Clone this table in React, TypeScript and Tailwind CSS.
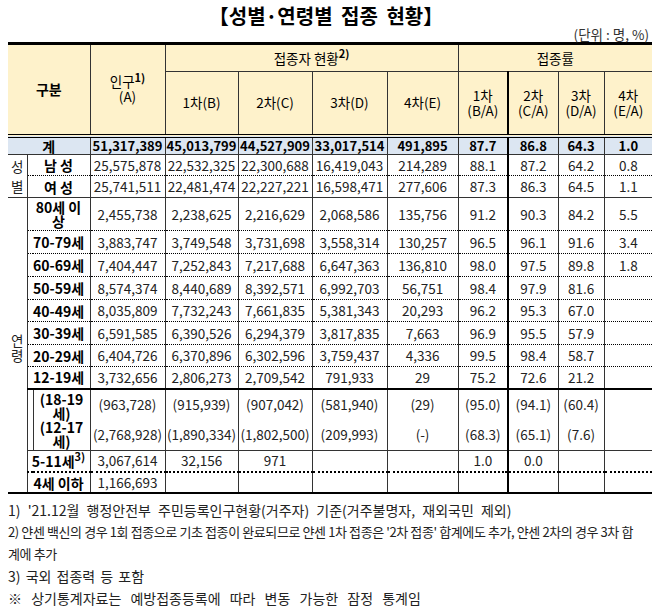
import React from 'react';

type Bottom = 'dot' | 'dot2' | 'solid' | 'thick' | 'none';

interface Row {
  label: React.ReactNode;
  v: string[];
  h: string;
  bottom: Bottom;
}

const BOTTOM: Record<Bottom, string> = {
  dot: 'border-b border-b-black [border-bottom-style:dotted]',
  dot2: 'border-b-2 border-b-black [border-bottom-style:dotted]',
  solid: 'border-b border-b-[#333]',
  thick: 'border-b-2 border-b-black',
  none: '',
};

// right edge of each data column: 인구, 1차~4차, 1차~4차 접종률
const RIGHT = [
  'border-r border-r-[#333]',
  'border-r border-r-[#333]',
  'border-r border-r-[#333]',
  'border-r border-r-[#333]',
  'border-r border-r-[#333]',
  'border-r-2 border-r-black',
  'border-r border-r-[#333]',
  'border-r border-r-[#333]',
  '',
];

const LINE = 'border-r border-r-[#333]';
const HEAD = 'bg-[#fef2cb] text-black text-[13.5px] font-normal leading-[15px] p-0 text-center align-middle';
const NUM = 'p-0 text-center align-middle whitespace-nowrap text-[13.5px] leading-[15px]';
const LABEL = 'p-0 text-center align-middle whitespace-nowrap text-[14px] leading-[14px] font-bold text-black';

const sexRows: Row[] = [
  { label: '남 성', v: ['25,575,878', '22,532,325', '22,300,688', '16,419,043', '214,289', '88.1', '87.2', '64.2', '0.8'], h: 'h-[21px]', bottom: 'dot' },
  { label: '여 성', v: ['25,741,511', '22,481,474', '22,227,221', '16,598,471', '277,606', '87.3', '86.3', '64.5', '1.1'], h: 'h-[22px]', bottom: 'solid' },
];

const ageRows: Row[] = [
  { label: <>80세 이<br />상</>, v: ['2,455,738', '2,238,625', '2,216,629', '2,068,586', '135,756', '91.2', '90.3', '84.2', '5.5'], h: 'h-[33px]', bottom: 'dot' },
  { label: '70-79세', v: ['3,883,747', '3,749,548', '3,731,698', '3,558,314', '130,257', '96.5', '96.1', '91.6', '3.4'], h: 'h-[23px]', bottom: 'dot' },
  { label: '60-69세', v: ['7,404,447', '7,252,843', '7,217,688', '6,647,363', '136,810', '98.0', '97.5', '89.8', '1.8'], h: 'h-[23px]', bottom: 'dot' },
  { label: '50-59세', v: ['8,574,374', '8,440,689', '8,392,571', '6,992,703', '56,751', '98.4', '97.9', '81.6', ''], h: 'h-[23px]', bottom: 'dot' },
  { label: '40-49세', v: ['8,035,809', '7,732,243', '7,661,835', '5,381,343', '20,293', '96.2', '95.3', '67.0', ''], h: 'h-[22px]', bottom: 'dot' },
  { label: '30-39세', v: ['6,591,585', '6,390,526', '6,294,379', '3,817,835', '7,663', '96.9', '95.5', '57.9', ''], h: 'h-[23px]', bottom: 'dot' },
  { label: '20-29세', v: ['6,404,726', '6,370,896', '6,302,596', '3,759,437', '4,336', '99.5', '98.4', '58.7', ''], h: 'h-[22px]', bottom: 'dot' },
  { label: '12-19세', v: ['3,732,656', '2,806,273', '2,709,542', '791,933', '29', '75.2', '72.6', '21.2', ''], h: 'h-[22px]', bottom: 'thick' },
];

const subRows: Row[] = [
  { label: <>(18-19<br />세)</>, v: ['(963,728)', '(915,939)', '(907,042)', '(581,940)', '(29)', '(95.0)', '(94.1)', '(60.4)', ''], h: 'h-[31px]', bottom: 'none' },
  { label: <>(12-17<br />세)</>, v: ['(2,768,928)', '(1,890,334)', '(1,802,500)', '(209,993)', '(-)', '(68.3)', '(65.1)', '(7.6)', ''], h: 'h-[30px]', bottom: 'solid' },
];

const youngRows: Row[] = [
  { label: <>5-11세<sup className="text-[11px] font-bold">3)</sup></>, v: ['3,067,614', '32,156', '971', '', '', '1.0', '0.0', '', ''], h: 'h-[22px]', bottom: 'dot2' },
  { label: '4세 이하', v: ['1,166,693', '', '', '', '', '', '', '', ''], h: 'h-[21px]', bottom: 'thick' },
];

function Cells({ row }: { row: Row }) {
  return (
    <>
      {row.v.map((val, i) => (
        <td key={i} className={`${NUM} ${RIGHT[i]} ${BOTTOM[row.bottom]} text-[#222]`}>
          {val}
        </td>
      ))}
    </>
  );
}

export default function App() {
  return (
    <div className="w-[652px] h-[613px] overflow-hidden bg-white text-[#1a1a1a] font-['Noto_Sans_CJK_KR','Noto_Sans',sans-serif]">
      <div className="pt-[4px] text-center text-[20px] font-bold leading-[23px] text-black [word-spacing:4px]">【성별·연령별 접종 현황】</div>
      <div className="pr-[3px] text-right text-[13.5px] leading-[14px] text-[#333]">(단위 : 명, %)</div>

      <table className="mt-px ml-2 w-[644px] table-fixed border-collapse">
        <colgroup>
          <col className="w-[19px]" />
          <col className="w-[6px]" />
          <col className="w-[57px]" />
          <col className="w-[75px]" />
          <col className="w-[73px]" />
          <col className="w-[74px]" />
          <col className="w-[75px]" />
          <col className="w-[71px]" />
          <col className="w-[50px]" />
          <col className="w-[50px]" />
          <col className="w-[46px]" />
          <col className="w-[48px]" />
        </colgroup>
        <thead>
          <tr className="h-[28px]">
            <th colSpan={3} rowSpan={2} className={`${HEAD} ${LINE} border-t-[3px] border-t-black !font-bold !text-[14px]`}>구분</th>
            <th rowSpan={2} className={`${HEAD} ${LINE} border-t-[3px] border-t-black`}>
              인구<sup className="text-[11px] font-bold">1)</sup>
              <br />
              (A)
            </th>
            <th colSpan={4} className={`${HEAD} ${LINE} border-t-[3px] border-t-black border-b border-b-[#333]`}>
              접종자 현황<sup className="text-[11px] font-bold">2)</sup>
            </th>
            <th colSpan={4} className={`${HEAD} border-t-[3px] border-t-black border-b border-b-[#333]`}>접종률</th>
          </tr>
          <tr className="h-[64px]">
            <th className={`${HEAD} ${RIGHT[1]}`}>1차(B)</th>
            <th className={`${HEAD} ${RIGHT[2]}`}>2차(C)</th>
            <th className={`${HEAD} ${RIGHT[3]}`}>3차(D)</th>
            <th className={`${HEAD} ${RIGHT[4]}`}>4차(E)</th>
            <th className={`${HEAD} ${RIGHT[5]}`}>1차<br />(B/A)</th>
            <th className={`${HEAD} ${RIGHT[6]}`}>2차<br />(C/A)</th>
            <th className={`${HEAD} ${RIGHT[7]}`}>3차<br />(D/A)</th>
            <th className={`${HEAD} ${RIGHT[8]}`}>4차<br />(E/A)</th>
          </tr>
        </thead>
        <tbody>
          <tr className="h-[19px] bg-[#dce6f2]">
            <td colSpan={3} className={`${LABEL} ${LINE} ${BOTTOM.solid} border-t-4 border-t-black [border-top-style:double]`}>계</td>
            {['51,317,389', '45,013,799', '44,527,909', '33,017,514', '491,895', '87.7', '86.8', '64.3', '1.0'].map((val, i) => (
              <td key={i} className={`${NUM} ${RIGHT[i]} ${BOTTOM.solid} border-t-4 border-t-black [border-top-style:double] font-bold text-black !text-[13px]`}>
                {val}
              </td>
            ))}
          </tr>

          {sexRows.map((row, r) => (
            <tr key={`s${r}`} className={row.h}>
              {r === 0 && (
                <td rowSpan={2} className={`${LINE} ${BOTTOM.solid} p-0 text-center align-middle text-[13.5px] leading-[20px] text-[#222]`}>
                  성<br />별
                </td>
              )}
              <td colSpan={2} className={`${LABEL} ${LINE} ${BOTTOM[row.bottom]}`}>{row.label}</td>
              <Cells row={row} />
            </tr>
          ))}

          {ageRows.map((row, r) => (
            <tr key={`a${r}`} className={row.h}>
              {r === 0 && (
                <td rowSpan={12} className={`${LINE} ${BOTTOM.thick} p-0 text-center align-middle text-[13.5px] leading-[15px] text-[#222]`}>
                  <div className="pt-[6px]">
                    연<br />령
                  </div>
                </td>
              )}
              <td colSpan={2} className={`${LABEL} ${LINE} ${BOTTOM[row.bottom]}`}>{row.label}</td>
              <Cells row={row} />
            </tr>
          ))}

          {subRows.map((row, r) => (
            <tr key={`g${r}`} className={row.h}>
              {r === 0 && <td rowSpan={2} className={`${LINE} ${BOTTOM.solid} p-0`} />}
              <td className={`${LABEL} ${LINE} ${BOTTOM[row.bottom]}`}>
                <div className={r === 0 ? 'pt-[2px]' : 'pb-[2px]'}>{row.label}</div>
              </td>
              <Cells row={row} />
            </tr>
          ))}

          {youngRows.map((row, r) => (
            <tr key={`y${r}`} className={row.h}>
              <td colSpan={2} className={`${LABEL} ${LINE} ${BOTTOM[row.bottom]}`}>{row.label}</td>
              <Cells row={row} />
            </tr>
          ))}
        </tbody>
      </table>

      <div className="mt-[5px] pl-2 text-[14px] leading-[22px] text-[#222]">
        <div className="whitespace-nowrap [word-spacing:4px]">1) '21.12월 행정안전부 주민등록인구현황(거주자) 기준(거주불명자, 재외국민 제외)</div>
        <div className="whitespace-nowrap text-[13px] tracking-[-0.4px]">2) 얀센 백신의 경우 1회 접종으로 기초 접종이 완료되므로 얀센 1차 접종은 '2차 접종' 합계에도 추가, 얀센 2차의 경우 3차 합</div>
        <div className="whitespace-nowrap text-[13px] tracking-[-0.4px]">계에 추가</div>
        <div className="whitespace-nowrap [word-spacing:2px]">3) 국외 접종력 등 포함</div>
        <div className="whitespace-nowrap [word-spacing:6px]">※ 상기통계자료는 예방접종등록에 따라 변동 가능한 잠정 통계임</div>
      </div>
    </div>
  );
}
